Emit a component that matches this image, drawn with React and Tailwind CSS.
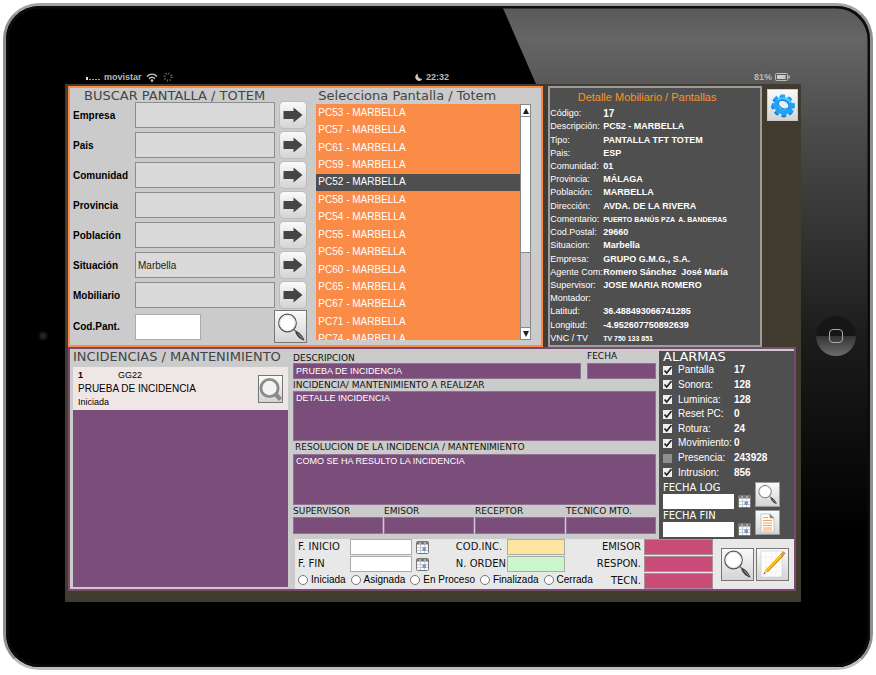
import { useState } from 'react';

const SANS = "font-['Liberation_Sans',Arial,sans-serif]";
const VERDANA = "font-['DejaVu_Sans',Verdana,sans-serif]";

const filters = [
    { id: 'empresa', name: 'Empresa', value: '' },
    { id: 'pais', name: 'Pais', value: '' },
    { id: 'comunidad', name: 'Comunidad', value: '' },
    { id: 'provincia', name: 'Provincia', value: '' },
    { id: 'poblacion', name: 'Población', value: '' },
    { id: 'situacion', name: 'Situación', value: 'Marbella' },
    { id: 'mobiliario', name: 'Mobiliario', value: '' },
];

const screens = ['PC53', 'PC57', 'PC61', 'PC59', 'PC52', 'PC58', 'PC54', 'PC55', 'PC56', 'PC60', 'PC65', 'PC67', 'PC71', 'PC74'];

const details = [
    { name: 'Código:', value: '17', size: 'text-[10px]' },
    { name: 'Descripción:', value: 'PC52 - MARBELLA' },
    { name: 'Tipo:', value: 'PANTALLA TFT TOTEM' },
    { name: 'Pais:', value: 'ESP' },
    { name: 'Comunidad:', value: '01' },
    { name: 'Provincia:', value: 'MÁLAGA' },
    { name: 'Población:', value: 'MARBELLA' },
    { name: 'Dirección:', value: 'AVDA. DE LA RIVERA' },
    { name: 'Comentario:', value: 'PUERTO BANÚS PZA  A. BANDERAS', size: 'text-[7px]' },
    { name: 'Cod.Postal:', value: '29660' },
    { name: 'Situacion:', value: 'Marbella' },
    { name: 'Empresa:', value: 'GRUPO G.M.G., S.A.' },
    { name: 'Agente Com:', value: 'Romero Sánchez  José María' },
    { name: 'Supervisor:', value: 'JOSE MARIA ROMERO' },
    { name: 'Montador:', value: '' },
    { name: 'Latitud:', value: '36.488493066741285' },
    { name: 'Longitud:', value: '-4.952607750892639' },
    { name: 'VNC / TV', value: 'TV 750 133 851', size: 'text-[7px]' },
];

const alarms = [
    { id: 'pantalla', name: 'Pantalla', value: '17', on: true },
    { id: 'sonora', name: 'Sonora:', value: '128', on: true },
    { id: 'luminica', name: 'Luminica:', value: '128', on: true },
    { id: 'reset', name: 'Reset PC:', value: '0', on: true },
    { id: 'rotura', name: 'Rotura:', value: '24', on: true },
    { id: 'movimiento', name: 'Movimiento:', value: '0', on: true },
    { id: 'presencia', name: 'Presencia:', value: '243928', on: false },
    { id: 'intrusion', name: 'Intrusion:', value: '856', on: true },
];

const states = ['Iniciada', 'Asignada', 'En Proceso', 'Finalizada', 'Cerrada'];

function ArrowIcon() {
    return (
        <svg viewBox="0 0 20 16" className="w-5 h-4">
            <path d="M.5 4h10V.5L19.500 8l-9 7.500V12H.5z" fill="#454545" />
        </svg>
    );
}

function MagnifierIcon({ className }) {
    return (
        <svg viewBox="0 0 30 30" className={className}>
            <path d="M18 17.500l3.500 4" stroke="#777" strokeWidth="1.600" />
            <path d="M20 19c3.500 1 7 5 8.500 9.500-4-.5-7.500-4-9-7.500z" fill="#3f3f3f" />
            <path d="M22 21.500l4.500 5" stroke="#a5a5a5" strokeWidth="1" />
            <circle cx="11.500" cy="11" r="8.800" fill="#fff" stroke="#555" strokeWidth="1.200" />
            <circle cx="11.500" cy="11" r="7.600" fill="none" stroke="#ddd" strokeWidth=".8" />
        </svg>
    );
}

function GrayMagnifierIcon() {
    return (
        <svg viewBox="0 0 24 26" className="w-6 h-[26px]">
            <path d="M17 18l5.500 6" stroke="#8b8b8b" strokeWidth="4.500" />
            <circle cx="11" cy="12" r="9" fill="#f4f4f4" stroke="#8b8b8b" strokeWidth="3" />
        </svg>
    );
}

function CalendarIcon() {
    return (
        <svg viewBox="0 0 13 13" className="w-[13px] h-[13px] shrink-0">
            <rect x=".5" y=".5" width="12" height="12" rx="1" fill="#fafafa" stroke="#777" />
            <rect x="1" y="1" width="11" height="2.500" fill="#777" />
            <path d="M3 2h2M8 2h2" stroke="#ddd" />
            <path d="M1 6.500h11M1 9.500h11M4.500 4v8M8.500 4v8" stroke="#bcc3cc" strokeWidth=".8" />
            <rect x="6.500" y="6.500" width="3.500" height="3.500" fill="#6f9ad6" />
        </svg>
    );
}

function GearIcon() {
    return (
        <svg viewBox="0 0 28 28" className="w-7 h-7">
            <g transform="rotate(28 14 15)">
                <ellipse cx="14" cy="15.500" rx="9.800" ry="8.600" fill="none" stroke="#1173d6" strokeWidth="4" strokeDasharray="4 3.220" />
                <ellipse cx="14" cy="14" rx="9.800" ry="8.400" fill="none" stroke="#1ba4f8" strokeWidth="4" strokeDasharray="4 3.180" />
                <ellipse cx="14" cy="14.500" rx="7.300" ry="6.300" fill="none" stroke="#1ba4f8" strokeWidth="4.600" />
                <ellipse cx="14" cy="13.500" rx="5.600" ry="4" fill="#e9edf0" stroke="#0f78d8" strokeWidth="1" />
                <path d="M6.500 12.500c1.500-5 8-7 12.500-4" fill="none" stroke="#5fd0ff" strokeWidth="1.400" />
            </g>
        </svg>
    );
}

function DocumentIcon() {
    return (
        <svg viewBox="0 0 20 22" className="w-5 h-[22px]">
            <path d="M4 2h9l4 4v14H4z" fill="#fffdf8" stroke="#bbb" strokeWidth=".8" />
            <path d="M13 2v4h4" fill="#8a8a8a" stroke="#888" strokeWidth=".6" />
            <path d="M6 5.500h5M6 8.500h9M6 11h9M6 13.500h9M6 16h9M6 18h9" stroke="#f4a650" strokeWidth="1.200" />
        </svg>
    );
}

function PencilIcon() {
    return (
        <svg viewBox="0 0 30 30" className="w-[30px] h-[30px]">
            <path d="M4 2h21v26H4z" fill="#fff" stroke="#ccc" strokeWidth=".7" />
            <path d="M9 3v25M14 3v25M19 3v25M4 8h21M4 13h21M4 18h21M4 23h21" stroke="#eee" strokeWidth=".7" />
            <path d="M6.500 25.500l1.500-4.500 2.600 2z" fill="#e9c9a0" />
            <path d="M6.500 25.500l.7-1.900 1.100.9z" fill="#333" />
            <path d="M8 21L24.500 4l2.400 2.200L10.600 23z" fill="#f5c01c" />
            <path d="M10.400 23L26.700 6.300" stroke="#b9770c" strokeWidth=".9" />
            <path d="M24.500 4l1.800-1.900 2.400 2.200-1.800 1.900z" fill="#e08a6a" />
            <path d="M23.700 4.800l2.400 2.200" stroke="#999" strokeWidth="1.200" />
        </svg>
    );
}

function IconButton({ label, className, children }) {
    return (
        <button
            type="button"
            aria-label={label}
            className={`flex items-center justify-center shrink-0 bg-gradient-to-b from-[#fafafa] to-[#d4d4d4] border ${className}`}
        >
            {children}
        </button>
    );
}

function StatusBar() {
    return (
        <div className={`${SANS} grid grid-cols-3 items-center h-[14px] pl-[21px] pr-[11px] text-[9px] leading-none font-bold text-[#b8b8b8]`}>
            <div className="flex items-center gap-1">
                <span className="flex items-end gap-px h-[5px]">
                    <i className="w-[2px] h-[3px] bg-[#ddd]"></i>
                    {[1, 2, 3, 4].map((n) => (
                        <i key={n} className="w-[2px] h-px bg-[#aaa]"></i>
                    ))}
                </span>
                <span>movistar</span>
                <svg viewBox="0 0 12 9" className="w-3 h-[9px]" fill="none" stroke="#c4c4c4" strokeWidth="1.500">
                    <path d="M1 3.500c3-3 7-3 10 0M3 5.600c2-1.800 4-1.800 6 0" />
                    <circle cx="6" cy="7.600" r=".6" />
                </svg>
                <svg viewBox="0 0 10 10" className="w-[10px] h-[10px] ml-px">
                    <circle cx="5" cy="5" r="3.600" fill="none" stroke="#777" strokeWidth="2" strokeDasharray="1 1.830" />
                </svg>
            </div>
            <div className="flex items-center justify-center gap-[3px] pr-3">
                <svg viewBox="0 0 8 8" className="w-2 h-2">
                    <path d="M3 .5a3.800 3.800 0 1 0 4.500 5.300A4 4 0 0 1 3 .5z" fill="#c8c8c8" />
                </svg>
                <span>22:32</span>
            </div>
            <div className="flex items-center justify-end gap-[3px]">
                <span>81%</span>
                <svg viewBox="0 0 15 8" className="w-[15px] h-2">
                    <rect x=".5" y=".5" width="12" height="7" rx="1" fill="none" stroke="#bbb" />
                    <rect x="2" y="2" width="8.500" height="4" fill="#ccc" />
                    <path d="M14 2.500v3" stroke="#bbb" strokeWidth="1.500" />
                </svg>
            </div>
        </div>
    );
}

function SearchPanel() {
    const [selected, setSelected] = useState('PC52');

    return (
        <section className="grid grid-cols-[12fr_11fr] gap-x-[9px] min-w-0 pl-[3px] pr-[10px] bg-[#cbcbcb] border-2 border-[#fb8c48]">
            <form className="flex flex-col min-w-0">
                <h2 className={`${VERDANA} h-3 pl-[11px] text-[13px] leading-4 text-[#444] whitespace-nowrap`}>BUSCAR PANTALLA / TOTEM</h2>
                {filters.map((filter) => (
                    <div key={filter.id} className="flex items-center h-[30px]">
                        <label htmlFor={filter.id} className="w-[62px] shrink-0 text-[10px] font-bold text-black">{filter.name}</label>
                        <input
                            id={filter.id}
                            defaultValue={filter.value}
                            className="flex-1 min-w-0 h-[26px] px-0.5 mr-1 text-[10px] text-[#222] bg-[#dadada] border border-[#8c8c8c]"
                        />
                        <IconButton label={`Buscar ${filter.name}`} className="w-7 h-7 rounded-[5px] border-[#bdbdbd]">
                            <ArrowIcon />
                        </IconButton>
                    </div>
                ))}
                <div className="flex items-center h-[33px]">
                    <label htmlFor="codpant" className="w-[62px] shrink-0 text-[10px] font-bold text-black">Cod.Pant.</label>
                    <input id="codpant" className="w-[66px] h-[26px] px-0.5 text-[10px] bg-white border border-[#aaa]" />
                    <IconButton label="Buscar pantalla" className="w-[33px] h-[33px] ml-auto border-[#777]">
                        <MagnifierIcon className="w-[30px] h-[30px]" />
                    </IconButton>
                </div>
            </form>

            <div className="flex flex-col min-w-0">
                <h2 className={`${VERDANA} h-4 pl-0.5 text-[13px] leading-4 text-[#444] whitespace-nowrap`}>Selecciona Pantalla / Totem</h2>
                <div className="flex h-[236px]">
                    <div className="flex-1 overflow-hidden bg-[#fb8c48]">
                        <ul className="flex flex-col h-[244px]">
                            {screens.map((code) => (
                                <li key={code} className="flex-1 flex">
                                    <button
                                        type="button"
                                        onClick={() => setSelected(code)}
                                        className={`flex-1 pl-0.5 text-left text-[10px] leading-4 text-white ${selected === code ? 'bg-[#4f4f4f]' : ''}`}
                                    >
                                        {code} - MARBELLA
                                    </button>
                                </li>
                            ))}
                        </ul>
                    </div>
                    {/* Scrollbar */}
                    <div className="w-[11px] flex flex-col bg-[#cfcbcf] border border-[#888]">
                        <button type="button" aria-label="Subir" className="h-3 flex items-center justify-center bg-white border-b border-[#888]">
                            <svg viewBox="0 0 6 6" className="w-1.5 h-1.5"><path d="M3 0l3 6H0z" fill="#222" /></svg>
                        </button>
                        <div className="h-[136px] bg-white border-b border-[#888]"></div>
                        <button type="button" aria-label="Bajar" className="h-3 mt-auto flex items-center justify-center bg-white border-t border-[#888]">
                            <svg viewBox="0 0 6 6" className="w-1.5 h-1.5"><path d="M0 0h6L3 6z" fill="#222" /></svg>
                        </button>
                    </div>
                </div>
            </div>
        </section>
    );
}

function DetailPanel() {
    return (
        <section className="flex flex-col min-w-0 bg-[#4f4f4f] border-2 border-[#9d9d9d] text-white">
            <h2 className="h-[19px] pr-4 text-center text-[11px] leading-[19px] text-[#fb931e] whitespace-nowrap">Detalle Mobiliario / Pantallas</h2>
            <dl className="flex-1 flex flex-col">
                {details.map((item) => (
                    <div key={item.name} className="flex-1 flex items-center leading-none whitespace-pre">
                        <dt className="w-[53px] text-[9px]">{item.name}</dt>
                        <dd className={`font-bold ${item.size || 'text-[9px]'}`}>{item.value}</dd>
                    </div>
                ))}
            </dl>
        </section>
    );
}

function IncidentList() {
    return (
        <div className="flex flex-col min-w-0 pb-0.5">
            <h2 className={`${VERDANA} h-[18px] text-[13px] leading-4 text-[#444] whitespace-nowrap`}>INCIDENCIAS / MANTENIMIENTO</h2>
            <div className="flex items-center justify-between h-[43px] px-[5px] bg-[#efe6e6] text-black">
                <div className="leading-none">
                    <p className="flex text-[9px]"><b className="w-10">1</b>GG22</p>
                    <p className="mt-1 text-[10px]">PRUEBA DE INCIDENCIA</p>
                    <p className="mt-1 text-[9px]">Iniciada</p>
                </div>
                <IconButton label="Ver incidencia" className="w-[25px] h-7 border-[#777]">
                    <GrayMagnifierIcon />
                </IconButton>
            </div>
            <div className="flex-1 bg-[#7a4d7a]"></div>
        </div>
    );
}

function IncidentForm() {
    const label = `${VERDANA} flex items-center text-[9px] leading-none text-[#111] whitespace-nowrap`;
    const field = 'block w-full px-0.5 text-[9px] text-white bg-[#7a4d7a] border border-[#8f7390] resize-none';

    return (
        <div className="flex flex-col pl-px pr-[3px]">
            <div className="flex gap-1.5">
                <div className="flex-1">
                    <label htmlFor="descripcion" className={`${label} h-[14px] pt-1`}>DESCRIPCION</label>
                    <input id="descripcion" defaultValue="PRUEBA DE INCIDENCIA" className={`${field} h-4`} />
                </div>
                <div className="w-[69px]">
                    <label htmlFor="fecha" className={`${label} h-[14px]`}>FECHA</label>
                    <input id="fecha" className={`${field} h-4`} />
                </div>
            </div>
            <label htmlFor="detalle" className={`${label} h-3`}>INCIDENCIA/ MANTENIMIENTO A REALIZAR</label>
            <textarea id="detalle" defaultValue="DETALLE INCIDENCIA" className={`${field} h-[50px]`} />
            <label htmlFor="resolucion" className={`${label} h-[13px] pl-0.5`}>RESOLUCION DE LA INCIDENCIA / MANTENIMIENTO</label>
            <textarea id="resolucion" defaultValue="COMO SE HA RESULTO LA INCIDENCIA" className={`${field} h-[51px]`} />
            <div className="grid grid-cols-4 gap-px">
                {['SUPERVISOR', 'EMISOR', 'RECEPTOR', 'TECNICO MTO.'].map((name) => (
                    <div key={name}>
                        <label htmlFor={name} className={`${label} h-3`}>{name}</label>
                        <input id={name} className={`${field} h-[17px]`} />
                    </div>
                ))}
            </div>
        </div>
    );
}

function AlarmPanel() {
    return (
        <div className="flex flex-col mt-0.5 pl-1 bg-[#4f4f4f] text-white">
            <h2 className={`${VERDANA} h-3 text-[13px] leading-3 font-medium`}>ALARMAS</h2>
            <ul className="h-[117px] flex flex-col">
                {alarms.map((alarm) => (
                    <li key={alarm.id} className="flex-1 flex items-center text-[10px] leading-none">
                        <span className="relative flex w-[15px]">
                            <input
                                id={alarm.id}
                                type="checkbox"
                                defaultChecked={alarm.on}
                                className="peer appearance-none w-[9px] h-[9px] bg-[#8e8e8e] checked:bg-[#eee]"
                            />
                            <svg viewBox="0 0 9 9" className="absolute left-0 top-0 w-[9px] h-[9px] hidden peer-checked:block pointer-events-none">
                                <path d="M1.500 4.500l2.200 2.500L8.500 1" fill="none" stroke="#222" strokeWidth="1.700" />
                            </svg>
                        </span>
                        <label htmlFor={alarm.id} className="w-14">{alarm.name}</label>
                        <b>{alarm.value}</b>
                    </li>
                ))}
            </ul>
            <div className="pt-0.5 pr-[14px]">
                <DateRow id="fechalog" name="FECHA LOG">
                    <IconButton label="Buscar log" className="w-[25px] h-[25px] border-[#999]">
                        <MagnifierIcon className="w-[21px] h-[21px]" />
                    </IconButton>
                </DateRow>
                <DateRow id="fechafin" name="FECHA FIN">
                    <IconButton label="Informe" className="w-[25px] h-[25px] border-[#999]">
                        <DocumentIcon />
                    </IconButton>
                </DateRow>
            </div>
        </div>
    );
}

function DateRow({ id, name, children }) {
    return (
        <div className="flex h-7 gap-1">
            <div className="flex-1 min-w-0">
                <label htmlFor={id} className={`${VERDANA} block h-3 text-[10px] leading-3`}>{name}</label>
                <input id={id} className="block w-full h-[15px] px-0.5 text-[10px] text-black bg-white" />
            </div>
            <div className="self-end pb-0.5">
                <CalendarIcon />
            </div>
            {children}
        </div>
    );
}

function BottomBar() {
    const label = `${VERDANA} text-[10px] leading-none text-[#111] whitespace-nowrap`;

    return (
        <form className="flex h-[50px] ml-[3px] pl-[3px] pr-[5px] bg-[#e8e8e8]">
            <div className="flex-1">
                <div className="grid grid-cols-[52px_62px_1fr_51px_58px] grid-rows-[16px_16px] gap-y-px items-center pr-8">
                    <label htmlFor="finicio" className={label}>F. INICIO</label>
                    <input id="finicio" className="h-4 min-w-0 px-0.5 text-[10px] bg-white border border-[#aaa]" />
                    <div className="pl-1"><CalendarIcon /></div>
                    <label htmlFor="codinc" className={label}>COD.INC.</label>
                    <input id="codinc" className="h-4 min-w-0 px-0.5 text-[10px] bg-[#fde7a0] border border-[#aaa]" />
                    <label htmlFor="ffin" className={label}>F. FIN</label>
                    <input id="ffin" className="h-4 min-w-0 px-0.5 text-[10px] bg-white border border-[#aaa]" />
                    <div className="pl-1"><CalendarIcon /></div>
                    <label htmlFor="norden" className={label}>N. ORDEN</label>
                    <input id="norden" className="h-4 min-w-0 px-0.5 text-[10px] bg-[#c9f7cb] border border-[#aaa]" />
                </div>
                <div className="flex gap-[5px] h-4 text-[10px] leading-none text-black whitespace-nowrap">
                    {states.map((state) => (
                        <label key={state} className="flex items-center gap-[3px]">
                            <input type="radio" name="estado" value={state} className="appearance-none w-[10px] h-[10px] rounded-full bg-white border border-[#777] checked:bg-[#555]" />
                            {state}
                        </label>
                    ))}
                </div>
            </div>
            <div className="grid grid-cols-[auto_69px] grid-rows-[16px_16px_16px] gap-x-[3px] gap-y-px items-center justify-items-end">
                {['EMISOR', 'RESPON.', 'TECN.'].map((name) => (
                    <div key={name} className="contents">
                        <label htmlFor={`bar-${name}`} className={label}>{name}</label>
                        <input id={`bar-${name}`} className="w-full h-4 px-0.5 text-[10px] text-white bg-[#c94b78] border border-[#a88f98]" />
                    </div>
                ))}
            </div>
            <div className="flex items-center gap-0.5 pl-2">
                <IconButton label="Buscar" className="w-[33px] h-[33px] border-[#777]">
                    <MagnifierIcon className="w-[30px] h-[30px]" />
                </IconButton>
                <IconButton label="Editar" className="w-[33px] h-[33px] border-[#777]">
                    <PencilIcon />
                </IconButton>
            </div>
        </form>
    );
}

export default function App() {
    return (
        <div className={`${SANS} min-h-screen bg-white p-[3px]`}>
            <div className="relative overflow-hidden rounded-[36px] border-[3px] border-t-[#a2a3a5] border-x-[#8f9092] border-b-[#bcbdbf] bg-black">
                {/* Glass reflection */}
                <svg viewBox="0 0 864 663" preserveAspectRatio="none" className="absolute inset-0 w-full h-full pointer-events-none">
                    <defs>
                        <linearGradient id="glass" x1="0" y1="0" x2="0" y2="1">
                            <stop offset="0" stopColor="#595959" />
                            <stop offset=".05" stopColor="#656565" />
                            <stop offset=".2" stopColor="#494949" />
                            <stop offset=".5" stopColor="#1c1c1c" />
                            <stop offset=".8" stopColor="#000" />
                        </linearGradient>
                    </defs>
                    <path d="M496 0H864V663H784Z" fill="url(#glass)" />
                    <rect x="1" y="1" width="862" height="661" rx="33" fill="none" stroke="#0c0c0c" strokeWidth="3" />
                </svg>

                <div className="relative flex pt-16 pb-[65px]">
                    <div className="w-[59px] flex items-center justify-end pr-[17px] shrink-0">
                        <span className="w-[10px] h-[10px] rounded-full bg-[#22222c] border-2 border-[#0e0e12]"></span>
                    </div>

                    <div className="flex-1 min-w-0">
                        <StatusBar />
                        <main className="bg-[#423b30] pt-0.5 pl-[3px] pr-[3px] pb-[11px]">
                            <div className="grid grid-cols-[20fr_9fr_31px] gap-x-[5px] h-[261px]">
                                <SearchPanel />
                                <DetailPanel />
                                <IconButton label="Configuración" className="w-[31px] h-8 mt-[3px] border-[#ccc]">
                                    <GearIcon />
                                </IconButton>
                            </div>

                            <section className="grid grid-cols-[3fr_7fr] gap-x-1 mr-0.5 pl-[3px] bg-[#cbcbcb] border-2 border-[#7b4a6f]">
                                <IncidentList />
                                <div>
                                    <div className="grid grid-cols-[1fr_135px] h-[190px]">
                                        <IncidentForm />
                                        <AlarmPanel />
                                    </div>
                                    <BottomBar />
                                </div>
                            </section>
                        </main>
                    </div>

                    <div className="w-[69px] flex items-center justify-center shrink-0">
                        <button type="button" aria-label="Inicio" className="w-10 h-10 flex items-center justify-center rounded-full bg-gradient-to-b from-[#161616] from-50% via-[#333] via-50% to-[#6d6d6d]">
                            <span className="w-[14px] h-[14px] rounded-[4px] border border-[#aaa]"></span>
                        </button>
                    </div>
                </div>
            </div>
        </div>
    );
}
